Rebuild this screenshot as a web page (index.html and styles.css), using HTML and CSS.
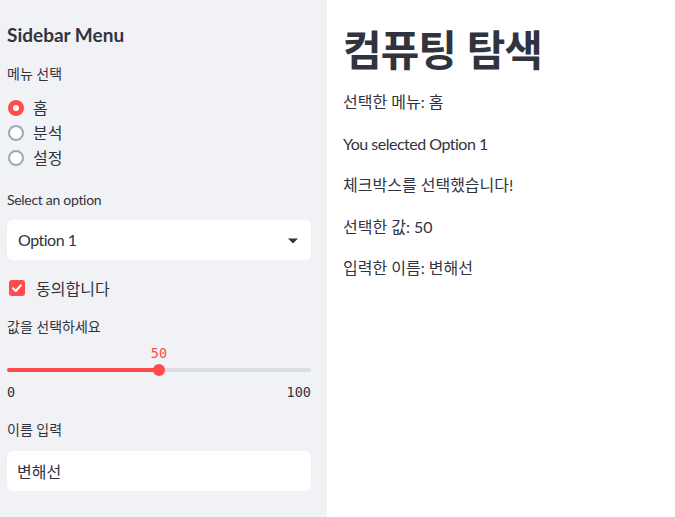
FILE: index.html
```html
<!DOCTYPE html>
<html lang="ko">
<head>
<meta charset="utf-8">
<link rel="stylesheet" href="styles.css">
</head>
<body>
<div class="app">
  <aside class="sidebar">
    <h2 class="side-title">Sidebar Menu</h2>
    <div class="label label-menu">메뉴 선택</div>
    <div class="radios">
      <div class="radio-row"><span class="radio on"></span><span>홈</span></div>
      <div class="radio-row"><span class="radio"></span><span>분석</span></div>
      <div class="radio-row"><span class="radio"></span><span>설정</span></div>
    </div>
    <div class="label label-select"><span class="latin-sm">Select an option</span></div>
    <div class="select">
      <span class="latin">Option 1</span>
      <svg class="caret" width="10" height="6" viewBox="0 0 10 6"><path d="M0 0.5 H10 L5 5.5 Z" fill="#31333f"/></svg>
    </div>
    <div class="check-row">
      <span class="checkbox">
        <svg width="16" height="16" viewBox="0 0 16 16"><path d="M4 8.2 L6.8 11 L12 5.2" fill="none" stroke="#fff" stroke-width="2" stroke-linecap="round" stroke-linejoin="round"/></svg>
      </span>
      <span>동의합니다</span>
    </div>
    <div class="label label-slider">값을 선택하세요</div>
    <div class="slider">
      <div class="slider-value-row"><span class="slider-value">50</span></div>
      <div class="track">
        <div class="fill" style="width:50%"></div>
        <div class="thumb" style="left:50%"></div>
      </div>
      <div class="ticks"><span>0</span><span>100</span></div>
    </div>
    <div class="label label-name">이름 입력</div>
    <div class="input">변해선</div>
  </aside>
  <main class="main">
    <h1 class="title">컴퓨팅 탐색</h1>
    <p>선택한 메뉴: 홈</p>
    <p><span class="latin">You selected Option 1</span></p>
    <p>체크박스를 선택했습니다!</p>
    <p>선택한 값: 50</p>
    <p>입력한 이름: 변해선</p>
  </main>
</div>
</body>
</html>
```

FILE: styles.css
```css
* { box-sizing: border-box; }
html, body {
  margin: 0;
  padding: 0;
  height: 517px;
  overflow: hidden;
}
body {
  font-family: Lato, "Noto Sans CJK KR", "Noto Sans", sans-serif;
  color: #31333f;
  background: #fff;
  font-size: 16px;
}
.latin { letter-spacing: -0.5px; }
.latin-sm { letter-spacing: -0.3px; }
.app {
  display: flex;
  height: 517px;
}
.sidebar {
  width: 327px;
  flex: none;
  background: #f0f2f6;
  padding: 23px 16px 0 7px;
  display: flex;
  flex-direction: column;
}
.side-title {
  margin: 0;
  font-size: 19px;
  font-weight: 700;
  line-height: 24px;
}
.label {
  font-size: 14px;
  line-height: 22px;
}
.label-menu { margin-top: 16px; }
.radios {
  margin-top: 10px;
  display: flex;
  flex-direction: column;
}
.radio-row {
  display: flex;
  align-items: center;
  height: 25px;
  gap: 9px;
  line-height: 25px;
  padding-left: 1px;
}
.radio {
  width: 16px;
  height: 16px;
  border-radius: 50%;
  border: 2px solid #a3a8b8;
  background: #fff;
  flex: none;
}
.radio.on {
  border: 5px solid #ff4b4b;
  background: #fff;
}
.label-select { margin-top: 19px; }
.select {
  margin-top: 9px;
  height: 40px;
  background: #fff;
  border-radius: 6px;
  display: flex;
  align-items: center;
  justify-content: space-between;
  padding: 0 13px 0 11px;
  line-height: 24px;
}
.caret { display: block; margin-top: 1px; }
.check-row {
  margin-top: 16px;
  display: flex;
  align-items: center;
  gap: 11px;
  height: 24px;
  padding-left: 2px;
}
.checkbox {
  width: 16px;
  height: 16px;
  border-radius: 3px;
  background: #ff4b4b;
  display: flex;
  flex: none;
}
.label-slider { margin-top: 16px; }
.slider { margin-top: 5px; }
.slider-value-row {
  position: relative;
  height: 20px;
}
.slider-value {
  position: absolute;
  left: 50%;
  transform: translateX(-50%);
  font-family: "DejaVu Sans Mono", monospace;
  font-size: 13.5px;
  line-height: 20px;
  color: #ff4b4b;
}
.track {
  position: relative;
  margin-top: 5px;
  height: 4px;
  border-radius: 2px;
  background: #d9dde6;
}
.fill {
  height: 4px;
  border-radius: 2px;
  background: #ff4b4b;
}
.thumb {
  position: absolute;
  top: -4px;
  width: 12px;
  height: 12px;
  margin-left: -6px;
  border-radius: 50%;
  background: #ff4b4b;
}
.ticks {
  margin-top: 10px;
  display: flex;
  justify-content: space-between;
  font-family: "DejaVu Sans Mono", monospace;
  font-size: 13.5px;
  line-height: 20px;
}
.label-name { margin-top: 17px; }
.input {
  margin-top: 10px;
  height: 40px;
  background: #fff;
  border-radius: 6px;
  padding: 0 10px;
  display: flex;
  align-items: center;
}
.main {
  flex: 1;
  padding: 22px 16px 0 16px;
}
.title {
  margin: 0 0 15px;
  font-family: "Noto Sans CJK KR", sans-serif;
  font-size: 42px;
  font-weight: 700;
  letter-spacing: -1px;
  line-height: 52px;
}
.main p {
  margin: 0 0 16px;
  line-height: 25.6px;
}
```
